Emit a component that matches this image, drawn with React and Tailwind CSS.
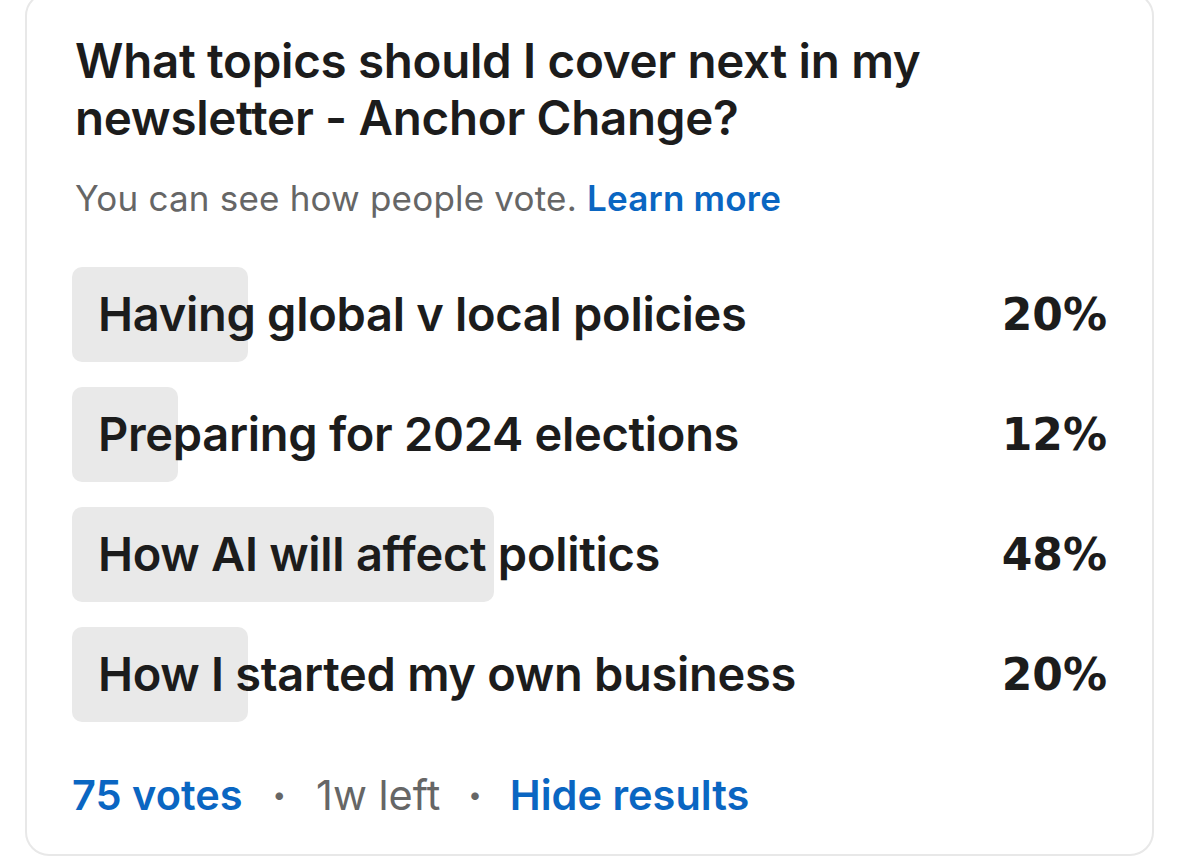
import React from 'react';

const options = [
  { label: 'Having global v local policies', pct: 20 },
  { label: 'Preparing for 2024 elections', pct: 12 },
  { label: 'How AI will affect politics', pct: 48 },
  { label: 'How I started my own business', pct: 20 },
];

const OptionRow = ({ label, pct }) => (
  <div className="flex items-center h-[95px]">
    <div className="relative flex-1 h-full flex items-center">
      <div
        className="absolute left-0 top-0 h-full rounded-[10px] bg-[#e9e9e9]"
        style={{ width: `${pct}%` }}
      />
      <span className="relative pl-[26px] text-[47px] font-semibold text-[#1c1c1c] tracking-[-0.3px]">
        {label}
      </span>
    </div>
    <div className="w-[155px] text-right text-[44px] font-bold text-[#1c1c1c] font-['DejaVu_Sans',sans-serif]">
      {pct}%
    </div>
  </div>
);

export default function App() {
  return (
    <div className="w-[1179px] h-[858px] bg-white overflow-hidden px-[25px] font-['Inter',sans-serif]">
      <div className="-mt-[8px] h-[864px] border-2 border-[#e8e8e8] rounded-[24px] px-[45px] pt-[38px]">
        <h1 className="pl-[3px] text-[47.5px] leading-[57px] font-semibold text-[#1c1c1c] tracking-[-0.3px]">
          What topics should I cover next in my
          <br />
          newsletter - Anchor Change?
        </h1>

        <p className="pl-[3px] mt-[32px] text-[35px] leading-[40px] text-[#666666] tracking-[0.2px]">
          You can see how people vote.{' '}
          <span className="font-semibold text-[#0a66c2]">Learn more</span>
        </p>

        <div className="mt-[49px] flex flex-col gap-[25px]">
          {options.map((o) => (
            <OptionRow key={o.label} label={o.label} pct={o.pct} />
          ))}
        </div>

        <div className="mt-[48px] flex items-center text-[41.5px] leading-[50px]">
          <span className="font-semibold text-[#0a66c2]">75 votes</span>
          <span className="mx-[30px] text-[#666666] text-[24px]">•</span>
          <span className="text-[#666666]">1w left</span>
          <span className="mx-[28px] text-[#666666] text-[24px]">•</span>
          <span className="font-semibold text-[#0a66c2]">Hide results</span>
        </div>
      </div>
    </div>
  );
}
